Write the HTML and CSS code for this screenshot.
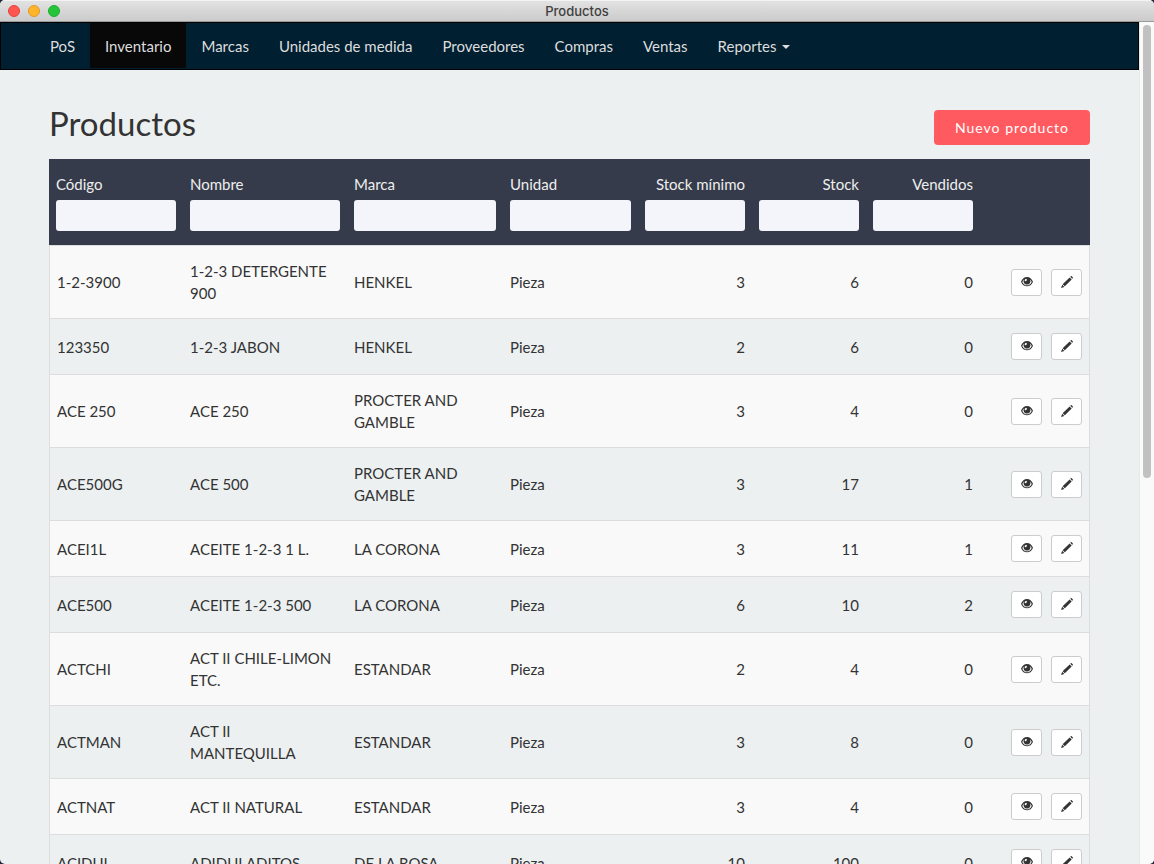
FILE: index.html
```html
<!DOCTYPE html>
<html lang="es">
<head>
<meta charset="utf-8">
<title>Productos</title>
<link rel="stylesheet" href="styles.css">
</head>
<body>
<svg class="sprite" aria-hidden="true">
  <symbol id="eye" viewBox="0 0 11 11">
    <path fill-rule="evenodd" d="M5.500 1C3 1 1.200 2.700 0 5.300 1.200 8 3 9.500 5.500 9.500S9.800 8 11 5.300C9.800 2.700 8 1 5.500 1zM5.500 8.500C3.600 8.500 2.200 7.300 1.200 5.400 1.600 4.400 2.100 3.700 2.700 3.200A3.100 3.100 0 0 0 5.500 7.800 3.100 3.100 0 0 0 8.300 3.200C8.900 3.700 9.400 4.400 9.800 5.400 8.800 7.300 7.400 8.500 5.500 8.500zM4.900 2.600c.7.500.6 1.400-.1 1.900-.6.500-1.300.2-1.500-.3.100-.8.800-1.500 1.600-1.600z"/>
  </symbol>
  <symbol id="pencil" viewBox="0 0 11 11">
    <path d="M8.500.7 9 .2q.4-.3.800.1l.9.900q.4.400.1.800l-.6.600zM7.900 1.300l1.900 1.900-6.300 6.300-2-2zM1.100 8l2 2L0 11z"/>
  </symbol>
</svg>
<div class="window">
  <header class="titlebar">
    <div class="lights"><span class="light close"></span><span class="light minimize"></span><span class="light expand"></span></div>
    <div class="title">Productos</div>
  </header>
  <div class="viewport">
    <div class="page">
      <nav class="navbar">
        <a href="#">PoS</a>
        <a href="#" class="active">Inventario</a>
        <a href="#">Marcas</a>
        <a href="#">Unidades de medida</a>
        <a href="#">Proveedores</a>
        <a href="#">Compras</a>
        <a href="#">Ventas</a>
        <a href="#">Reportes<span class="caret"></span></a>
      </nav>
      <main class="content">
        <div class="heading">
          <h1>Productos</h1>
          <button type="button" class="primary">Nuevo producto</button>
        </div>
        <table class="products">
          <colgroup><col class="c-code"><col class="c-name"><col class="c-brand"><col class="c-unit"><col class="c-num"><col class="c-num"><col class="c-num"><col class="c-actions"></colgroup>
          <thead>
            <tr>
              <th><label for="f1">Código</label><input id="f1" type="text"></th>
              <th><label for="f2">Nombre</label><input id="f2" type="text"></th>
              <th><label for="f3">Marca</label><input id="f3" type="text"></th>
              <th><label for="f4">Unidad</label><input id="f4" type="text"></th>
              <th class="num"><label for="f5">Stock mínimo</label><input id="f5" type="text"></th>
              <th class="num"><label for="f6">Stock</label><input id="f6" type="text"></th>
              <th class="num"><label for="f7">Vendidos</label><input id="f7" type="text"></th>
              <th></th>
            </tr>
          </thead>
          <tbody id="rows"></tbody>
        </table>
      </main>
    </div>
    <div class="scrollbar"><div class="thumb"></div></div>
  </div>
</div>
<script src="script.js"></script>
</body>
</html>
```
FILE: styles.css
```css
* { box-sizing: border-box; }

body {
  margin: 0;
  background: #23243a;
  color: #333;
  font: 15px/22px Lato, sans-serif;
}

.sprite { position: absolute; width: 0; height: 0; }

.window {
  display: flex;
  flex-direction: column;
  height: 100vh;
  overflow: hidden;
  border-radius: 5px;
  background: #ecf0f1;
}

.titlebar {
  display: grid;
  grid-template-columns: 1fr auto 1fr;
  align-items: center;
  flex: none;
  height: 22px;
  padding: 0 8px;
  border-top: 1px solid #f3f3f3;
  border-bottom: 1px solid #9a9a9a;
  background: linear-gradient(#e2e2e2, #cbcbcb);
}
.lights { display: flex; gap: 8px; }
.light { width: 12px; height: 12px; border: 1px solid; border-radius: 50%; }
.close { background: #ff5650; border-color: #e2443f; }
.minimize { background: #ffb429; border-color: #dd9a2a; }
.expand { background: #25c539; border-color: #1fac2e; }
.title { color: #404040; font: 500 13px/20px Inter, sans-serif; }

.viewport { display: flex; flex: 1; min-height: 0; }
.page { flex: 1; min-width: 0; overflow: hidden; }

.navbar {
  display: flex;
  height: 48px;
  padding: 0 34px 1px;
  border: 1px solid #000;
  background: #001f30;
}
.navbar a {
  display: flex;
  align-items: center;
  padding: 0 15px;
  color: #ddd;
  text-decoration: none;
}
.navbar .active { background: #080808; }
.caret {
  margin: 2px 0 0 5px;
  border: 4px solid transparent;
  border-top-color: currentColor;
  border-bottom: 0;
}

.content { padding: 36px 49px 0; }
.heading {
  display: flex;
  justify-content: space-between;
  align-items: flex-start;
  height: 53px;
}
h1 { margin: 0; font-size: 33px; line-height: 34px; font-weight: 400; }
.primary {
  height: 35px;
  margin-top: 4px;
  padding: 0 21px;
  border: 0;
  border-radius: 4px;
  background: #ff5a5f;
  color: #fff;
  font: 14px/22px Lato, sans-serif;
  letter-spacing: 1px;
}

.products { width: 100%; table-layout: fixed; border-collapse: separate; border-spacing: 0; }
.c-code { width: 134px; }
.c-name { width: 164px; }
.c-brand { width: 156px; }
.c-unit { width: 135px; }
.c-num { width: 114px; }
.c-actions { width: 110px; }

th { padding: 14px 7px; background: #353b4a; color: #eee; font-weight: 400; text-align: left; }
th label { display: block; margin-bottom: 5px; }
th input {
  display: block;
  width: 100%;
  height: 31px;
  padding: 0 8px;
  border: 0;
  border-radius: 3px;
  background: #f4f5fb;
  color: #333;
  font: inherit;
}
td { padding: 14px 7px; border-top: 1px solid #ddd; vertical-align: middle; }
td:first-child { border-left: 1px solid #ddd; }
td:last-child { border-right: 1px solid #ddd; }
tbody tr:nth-child(odd) { background: #f9f9f9; }
.num { text-align: right; }

.actions { display: flex; justify-content: flex-end; gap: 9px; }
.actions button {
  width: 31px;
  height: 27px;
  padding: 6px 8px 7px 9px;
  border: 1px solid #ccc;
  border-radius: 3px;
  background: #fff;
  color: #333;
}
.actions svg { display: block; width: 12px; height: 12px; fill: currentColor; }

.scrollbar { flex: none; width: 15px; padding: 3px 3px 0; border-left: 1px solid #e8e8e8; background: #fafafa; }
.thumb { width: 8px; height: 54%; border-radius: 4px; background: #c1c1c1; }
```
FILE: script.js
```js
const products = [
  ["1-2-3900", "1-2-3 DETERGENTE 900", "HENKEL", 3, 6, 0],
  ["123350", "1-2-3 JABON", "HENKEL", 2, 6, 0],
  ["ACE 250", "ACE 250", "PROCTER AND GAMBLE", 3, 4, 0],
  ["ACE500G", "ACE 500", "PROCTER AND GAMBLE", 3, 17, 1],
  ["ACEI1L", "ACEITE 1-2-3 1 L.", "LA CORONA", 3, 11, 1],
  ["ACE500", "ACEITE 1-2-3 500", "LA CORONA", 6, 10, 2],
  ["ACTCHI", "ACT II CHILE-LIMON ETC.", "ESTANDAR", 2, 4, 0],
  ["ACTMAN", "ACT II\nMANTEQUILLA", "ESTANDAR", 3, 8, 0],
  ["ACTNAT", "ACT II NATURAL", "ESTANDAR", 3, 4, 0],
  ["ACIDUL", "ADIDULADITOS", "DE LA ROSA", 10, 100, 0]
];

const icon = (id) => `<svg aria-hidden="true"><use href="#${id}"/></svg>`;

document.getElementById("rows").innerHTML = products.map(([code, name, brand, min, stock, sold]) => `
  <tr>
    <td>${code}</td><td>${name.replace("\n", "<br>")}</td><td>${brand}</td><td>Pieza</td>
    <td class="num">${min}</td><td class="num">${stock}</td><td class="num">${sold}</td>
    <td><div class="actions">
      <button type="button" aria-label="Ver ${name}">${icon("eye")}</button>
      <button type="button" aria-label="Editar ${name}">${icon("pencil")}</button>
    </div></td>
  </tr>`).join("");
```
